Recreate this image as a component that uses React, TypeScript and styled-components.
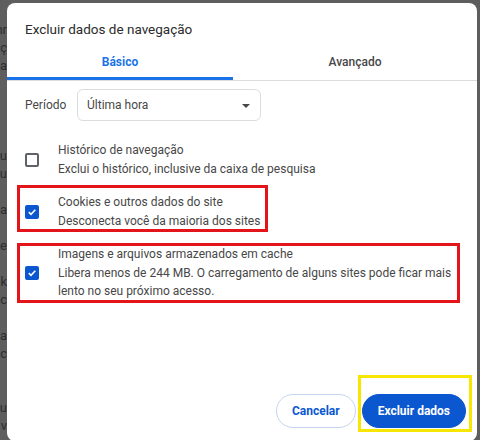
import styled, { createGlobalStyle } from "styled-components";

const Global = createGlobalStyle`
  html, body {
    margin: 0;
    padding: 0;
    background: #5e5e5e;
  }
  * { box-sizing: border-box; }
`;

const Screen = styled.div`
  position: relative;
  display: flex;
  width: 480px;
  height: 440px;
  padding: 3px 3px 0 0;
  overflow: hidden;
  font-family: Roboto, "Liberation Sans", sans-serif;
`;

const PageEdge = styled.div`
  width: 7px;
  flex: none;
  overflow: hidden;
  display: flex;
  flex-direction: column;
  align-items: flex-end;
  padding-top: 18px;
  color: #2e2e2e;
  font-size: 13px;
  line-height: 18px;
  & span {
    white-space: nowrap;
  }
`;

const Dialog = styled.div`
  flex: 1;
  height: 438px;
  background: #fff;
  border-radius: 8px;
  display: flex;
  flex-direction: column;
  padding-bottom: 13px;
`;

const Title = styled.h1`
  margin: 0;
  padding: 16px 18px 0;
  font-size: 13.5px;
  line-height: 20px;
  font-weight: 400;
  color: #2b2b2b;
`;

const TabList = styled.div`
  display: flex;
  margin-top: 5px;
  border-bottom: 1px solid #dadce0;
`;

const Tab = styled.div<{ active?: boolean; width?: number }>`
  ${(p) => (p.width ? `width: ${p.width}px;` : "flex: 1;")}
  height: 36px;
  padding-top: 3px;
  line-height: 30px;
  text-align: center;
  font-size: 12px;
  font-weight: ${(p) => (p.active ? 700 : 500)};
  color: ${(p) => (p.active ? "#1a73e8" : "#474747")};
  border-bottom: 3px solid ${(p) => (p.active ? "#1a73e8" : "transparent")};
`;

const PeriodRow = styled.div`
  display: flex;
  align-items: center;
  margin-top: 8px;
  padding-left: 18px;
`;

const Label = styled.span`
  width: 52px;
  font-size: 12px;
  color: #474747;
`;

const Select = styled.div`
  width: 184px;
  height: 32px;
  border: 1px solid #dadce0;
  border-radius: 6px;
  display: flex;
  align-items: center;
  justify-content: space-between;
  padding: 0 10px 0 9px;
  font-size: 12px;
  color: #474747;
`;

const Caret = styled.span`
  width: 0;
  height: 0;
  border-left: 4px solid transparent;
  border-right: 4px solid transparent;
  border-top: 4px solid #474747;
  margin-top: 1px;
`;

const Options = styled.div`
  display: flex;
  flex-direction: column;
  gap: 15px;
  margin-top: 20px;
`;

const Option = styled.div`
  display: flex;
  align-items: center;
  padding: 0 18px;
`;

const Box = styled.span<{ checked?: boolean }>`
  width: 14px;
  height: 14px;
  flex: none;
  border-radius: 2px;
  border: 2px solid ${(p) => (p.checked ? "#0b57d0" : "#5f6368")};
  background: ${(p) => (p.checked ? "#0b57d0" : "#fff")};
  display: flex;
  align-items: center;
  justify-content: center;
  margin-right: 19px;
`;

const OptionText = styled.div`
  font-size: 12px;
  line-height: 18.5px;
  color: #474747;
  white-space: nowrap;
`;

const Footer = styled.div`
  margin-top: auto;
  display: flex;
  justify-content: flex-end;
  gap: 6px;
  padding-right: 11px;
`;

const Button = styled.button<{ primary?: boolean }>`
  height: 34px;
  padding: 0 15px;
  border-radius: 17px;
  font-family: inherit;
  font-size: 12px;
  font-weight: 700;
  white-space: nowrap;
  border: 1px solid ${(p) => (p.primary ? "#0b57d0" : "#c5d4f0")};
  background: ${(p) => (p.primary ? "#0b57d0" : "#fff")};
  color: ${(p) => (p.primary ? "#fff" : "#0b57d0")};
`;

const Mark = styled.div<{ color: string }>`
  position: absolute;
  border: 3px solid ${(p) => p.color};
  pointer-events: none;
`;

function Check({ checked }: { checked?: boolean }) {
  return (
    <Box checked={checked}>
      {checked && (
        <svg width="10" height="10" viewBox="0 0 10 10">
          <path d="M1.8 5.2 L4 7.3 L8.3 2.8" fill="none" stroke="#fff" strokeWidth="1.6" />
        </svg>
      )}
    </Box>
  );
}

const edgeLines = ["nr", "iç", "ıa", "", "", "", "", "u", "u", "", "a", "", "e", "", "k", "c", "", "a", "c", "", "", "u", "v"];

export default function App() {
  return (
    <>
      <Global />
      <Screen>
        <PageEdge>
          {edgeLines.map((t, i) => (
            <span key={i}>{t || "\u00a0"}</span>
          ))}
        </PageEdge>
        <Dialog>
          <Title>Excluir dados de navegação</Title>
          <TabList>
            <Tab active width={226}>Básico</Tab>
            <Tab>Avançado</Tab>
          </TabList>
          <PeriodRow>
            <Label>Período</Label>
            <Select>
              Última hora
              <Caret />
            </Select>
          </PeriodRow>
          <Options>
            <Option>
              <Check />
              <OptionText>
                Histórico de navegação
                <br />
                Exclui o histórico, inclusive da caixa de pesquisa
              </OptionText>
            </Option>
            <Option>
              <Check checked />
              <OptionText>
                Cookies e outros dados do site
                <br />
                Desconecta você da maioria dos sites
              </OptionText>
            </Option>
            <Option>
              <Check checked />
              <OptionText>
                Imagens e arquivos armazenados em cache
                <br />
                Libera menos de 244 MB. O carregamento de alguns sites pode ficar mais
                <br />
                lento no seu próximo acesso.
              </OptionText>
            </Option>
          </Options>
          <Footer>
            <Button>Cancelar</Button>
            <Button primary>Excluir dados</Button>
          </Footer>
        </Dialog>
        <Mark color="#e3151a" style={{ left: 17, top: 185, width: 251, height: 47 }} />
        <Mark color="#e3151a" style={{ left: 17, top: 243, width: 443, height: 60 }} />
        <Mark color="#f7e600" style={{ left: 358, top: 375, width: 114, height: 57 }} />
      </Screen>
    </>
  );
}
